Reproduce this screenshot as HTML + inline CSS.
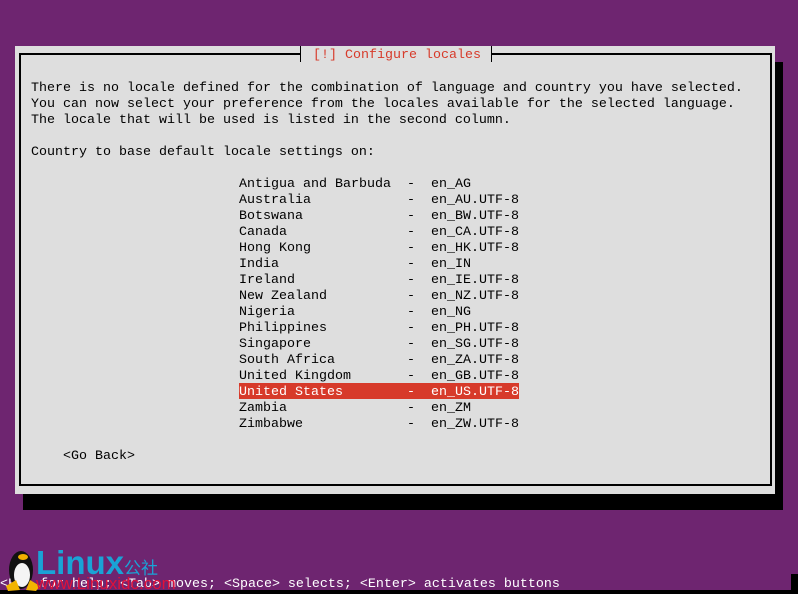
<!DOCTYPE html>
<html><head><style>
html,body{margin:0;padding:0}
body{width:798px;height:594px;background:#6e2570;position:relative;overflow:hidden;font-family:"Liberation Mono",monospace;font-size:13.33px;line-height:16px;color:#000}
.a{position:absolute}
pre{margin:0;font:inherit;white-space:pre;position:absolute}
</style></head><body>
<div class="a" style="left:23px;top:62px;width:760px;height:448px;background:#000"></div>
<div class="a" style="left:15px;top:46px;width:760px;height:448px;background:#dedede"></div>
<div class="a" style="left:19px;top:53px;width:281px;height:2px;background:#000"></div>
<div class="a" style="left:300px;top:46px;width:1px;height:16px;background:#000"></div>
<div class="a" style="left:491px;top:46px;width:1px;height:16px;background:#000"></div>
<div class="a" style="left:491px;top:53px;width:281px;height:2px;background:#000"></div>
<div class="a" style="left:19px;top:53px;width:2px;height:433px;background:#000"></div>
<div class="a" style="left:770px;top:53px;width:2px;height:433px;background:#000"></div>
<div class="a" style="left:19px;top:484px;width:753px;height:2px;background:#000"></div>
<pre style="left:313px;top:48px;color:#d73a2a">[!] Configure locales</pre>
<pre style="left:31px;top:81px">There is no locale defined for the combination of language and country you have selected.
You can now select your preference from the locales available for the selected language.
The locale that will be used is listed in the second column.

Country to base default locale settings on:</pre>
<div class="a" style="left:239px;top:383px;width:280px;height:16px;background:#d73a2a"></div>
<pre style="left:239px;top:177px">Antigua and Barbuda  -  en_AG
Australia            -  en_AU.UTF-8
Botswana             -  en_BW.UTF-8
Canada               -  en_CA.UTF-8
Hong Kong            -  en_HK.UTF-8
India                -  en_IN
Ireland              -  en_IE.UTF-8
New Zealand          -  en_NZ.UTF-8
Nigeria              -  en_NG
Philippines          -  en_PH.UTF-8
Singapore            -  en_SG.UTF-8
South Africa         -  en_ZA.UTF-8
United Kingdom       -  en_GB.UTF-8
<span style="color:#fff">United States        -  en_US.UTF-8</span>
Zambia               -  en_ZM
Zimbabwe             -  en_ZW.UTF-8</pre>
<pre style="left:63px;top:449px">&lt;Go Back&gt;</pre>
<div class="a" style="left:0;top:590px;width:798px;height:4px;background:#000"></div>
<div class="a" style="left:791px;top:574px;width:7px;height:20px;background:#000"></div>
<pre style="left:0;top:577px;color:#fff">&lt;F1&gt; for help; &lt;Tab&gt; moves; &lt;Space&gt; selects; &lt;Enter&gt; activates buttons</pre>
<svg class="a" style="left:4px;top:544px" width="40" height="48" viewBox="0 0 40 48">
<ellipse cx="17" cy="26" rx="12" ry="19" fill="#111"/>
<ellipse cx="18" cy="31" rx="8" ry="12" fill="#f4f4f4"/>
<ellipse cx="19" cy="13" rx="5" ry="3" fill="#f0b000"/>
<path d="M2 42 L12 36 L16 46 L4 47Z" fill="#f2b400"/>
<path d="M22 46 L26 36 L36 42 L32 47Z" fill="#f2b400"/>
</svg>
<div class="a" style="left:36px;top:546px;font-family:'Liberation Sans','Noto Sans CJK SC',sans-serif;font-weight:bold;font-size:33px;line-height:34px;color:#1aa3d6">Linux<span style="font-size:17px;font-weight:normal">公社</span></div>
<div class="a" style="left:36px;top:575px;font-family:'Liberation Sans',sans-serif;font-size:17px;line-height:18px;color:#e0103a">www.Linuxidc.com</div>
</body></html>
